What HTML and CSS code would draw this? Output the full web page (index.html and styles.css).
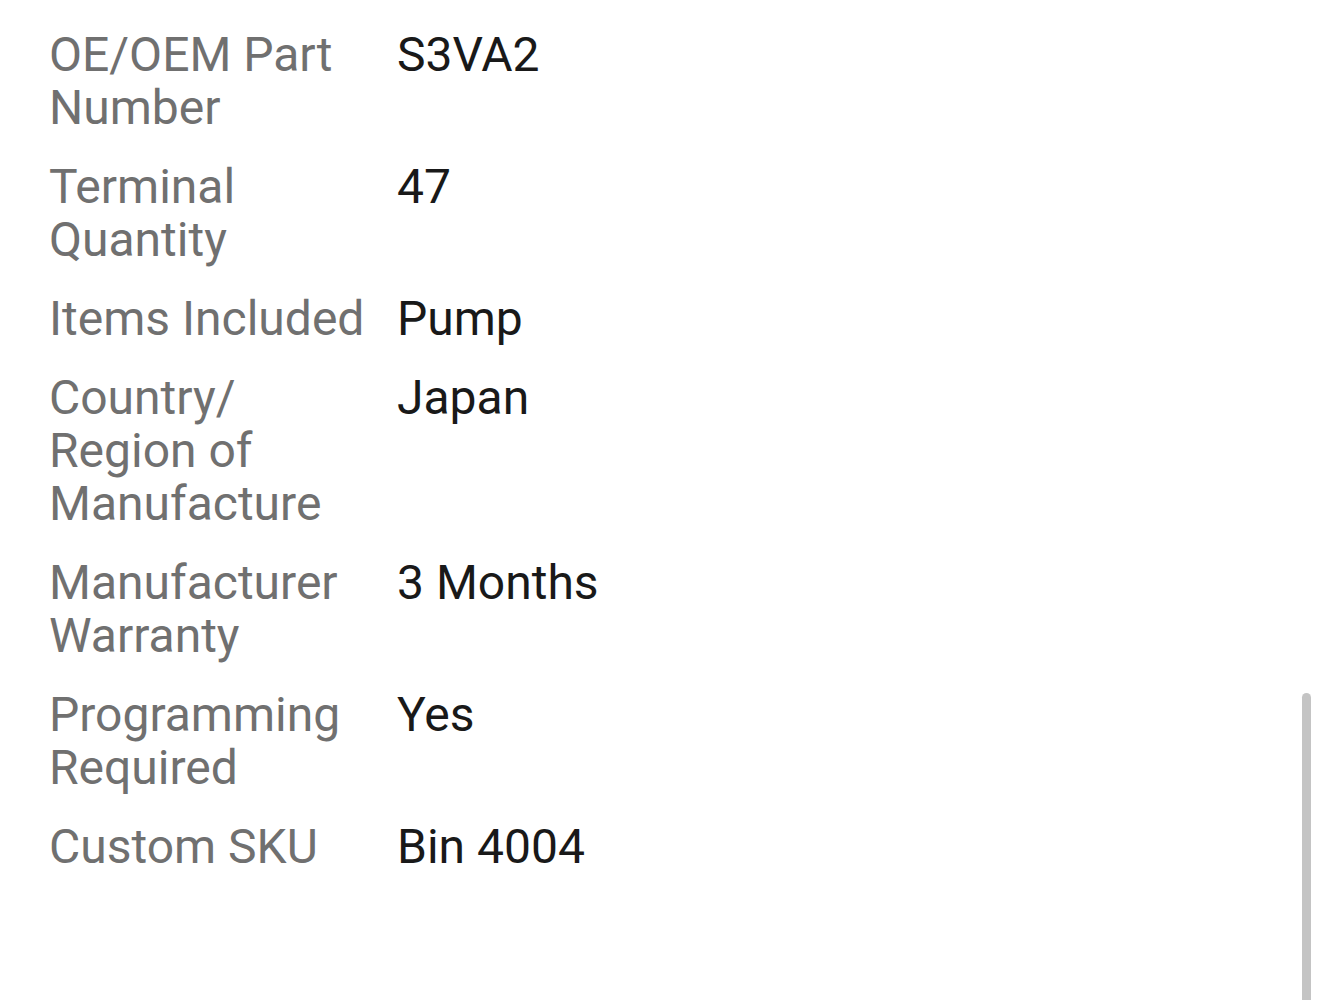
FILE: index.html
```html
<!DOCTYPE html>
<html lang="en">
<head>
<meta charset="utf-8">
<title>Item specifics</title>
<link rel="stylesheet" href="styles.css">
</head>
<body>
<div class="page">
  <dl class="specs">
    <div class="row"><dt class="label">OE/OEM Part Number</dt><dd class="value">S3VA2</dd></div>
    <div class="row"><dt class="label">Terminal Quantity</dt><dd class="value">47</dd></div>
    <div class="row"><dt class="label">Items Included</dt><dd class="value">Pump</dd></div>
    <div class="row"><dt class="label">Country/ Region of Manufacture</dt><dd class="value">Japan</dd></div>
    <div class="row"><dt class="label">Manufacturer Warranty</dt><dd class="value">3 Months</dd></div>
    <div class="row"><dt class="label">Programming Required</dt><dd class="value">Yes</dd></div>
    <div class="row"><dt class="label">Custom SKU</dt><dd class="value">Bin 4004</dd></div>
  </dl>
  <div class="scrollbar"></div>
</div>
</body>
</html>
```
FILE: styles.css
```css
html, body {
  margin: 0;
  padding: 0;
  background: #ffffff;
}
.page {
  position: relative;
  width: 1320px;
  height: 1000px;
  overflow: hidden;
  font-family: Roboto, "Liberation Sans", sans-serif;
}
.specs {
  margin: 0;
  padding: 28px 0 0 49px;
  display: flex;
  flex-direction: column;
  gap: 26px;
}
.row {
  display: grid;
  grid-template-columns: 348px auto;
  font-size: 48px;
  line-height: 53px;
}
.label {
  margin: 0;
  color: #707070;
  width: 336px;
}
.value {
  margin: 0;
  color: #191919;
}
.scrollbar {
  position: absolute;
  left: 1302px;
  top: 693px;
  width: 9px;
  height: 320px;
  border-radius: 5px;
  background: #c4c4c4;
}
```
